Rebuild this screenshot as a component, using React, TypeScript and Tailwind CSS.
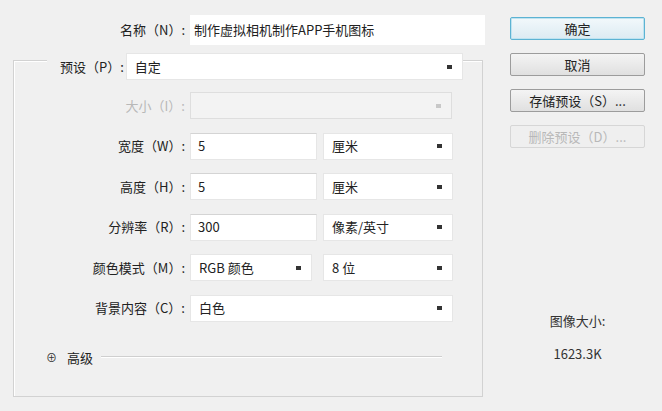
import React from "react";

const font = { fontFamily: '"Noto Sans CJK SC", "Noto Sans", sans-serif' };

function Arrow({ dim }: { dim?: boolean }) {
  return <span className={`w-[5px] h-[4px] ${dim ? "bg-[#c8c8c8]" : "bg-[#333]"}`} />;
}

function Select({ value, w, dim }: { value: string; w: string; dim?: boolean }) {
  return (
    <div className={`${w} h-[27px] flex items-center justify-between pl-[8px] pr-[10px] border ${dim ? "bg-[#f3f3f3] border-[#dedede]" : "bg-white border-[#e6e6e6]"}`}>
      <span className="text-[13px] text-[#222]">{value}</span>
      <Arrow dim={dim} />
    </div>
  );
}

function Input({ value }: { value: string }) {
  return (
    <div className="w-[127px] h-[27px] flex items-center pl-[7px] bg-white border border-[#e6e6e6] border-t-[#d4d4d4]">
      <span className="text-[13px] text-[#222]">{value}</span>
    </div>
  );
}

function Row({ label, children, dim }: { label: string; children: React.ReactNode; dim?: boolean }) {
  return (
    <div className="flex items-center h-[27px]">
      <div className={`w-[176px] text-right pr-[5px] text-[13px] whitespace-nowrap ${dim ? "text-[#b8b8b8]" : "text-[#222]"}`}>{label}</div>
      <div className="flex items-center gap-[6px]">{children}</div>
    </div>
  );
}

function Btn({ label, primary, dim }: { label: string; primary?: boolean; dim?: boolean }) {
  return (
    <div
      className={`w-[135px] h-[23px] flex items-center justify-center text-[13px] rounded-[2px] border whitespace-nowrap ${
        primary
          ? "border-[#5cb3d3] bg-gradient-to-b from-[#f2f8fb] to-[#dcebf2] text-[#222] shadow-[inset_0_0_0_1px_#bfe3f0]"
          : dim
          ? "border-[#d6d6d6] bg-[#efefef] text-[#b8b8b8]"
          : "border-[#9c9c9c] bg-gradient-to-b from-[#f4f4f4] to-[#e0e0e0] text-[#222]"
      }`}
    >
      {label}
    </div>
  );
}

export default function App() {
  return (
    <div className="w-[662px] h-[411px] bg-[#f0f0f0] flex overflow-hidden" style={font}>
      {/* left column */}
      <div className="w-[495px] flex flex-col pl-[13px]">
        <div className="flex items-center h-[30px] mt-[15px]">
          <div className="w-[177px] text-right pr-[5px] text-[13px] text-[#222] whitespace-nowrap">名称（N）:</div>
          <div className="w-[295px] h-[30px] bg-white flex items-center pl-[4px] text-[13px] text-[#222]">
            制作虚拟相机制作APP手机图标
          </div>
        </div>

        {/* group box */}
        <div className="mt-[15px] w-[470px] h-[337px] border border-[#d2d2d2] shadow-[inset_1px_1px_0_#ffffff] flex flex-col">
          <div className="flex items-center -mt-[8px]">
            <div className="w-[33px] h-[27px]" />
            <div className="h-[27px] flex items-center bg-[#f0f0f0] pl-[13px] pr-[2px] text-[13px] text-[#222] whitespace-nowrap">预设（P）:</div>
            <Select value="自定" w="w-[337px]" />
          </div>
          <div className="flex flex-col mt-[12px] gap-[13.5px]">
            <Row label="大小（I）:" dim>
              <Select value="" w="w-[262px]" dim />
            </Row>
            <Row label="宽度（W）:">
              <Input value="5" />
              <Select value="厘米" w="w-[130px]" />
            </Row>
            <Row label="高度（H）:">
              <Input value="5" />
              <Select value="厘米" w="w-[130px]" />
            </Row>
            <Row label="分辨率（R）:">
              <Input value="300" />
              <Select value="像素/英寸" w="w-[130px]" />
            </Row>
            <Row label="颜色模式（M）:">
              <div className="flex items-center gap-[11px]">
                <Select value="RGB 颜色" w="w-[122px]" />
                <Select value="8 位" w="w-[130px]" />
              </div>
            </Row>
            <Row label="背景内容（C）:">
              <Select value="白色" w="w-[263px]" />
            </Row>
          </div>
          <div className="flex items-center mt-[26px] pl-[32px] pr-[40px]">
            <span className="text-[11px] text-[#333] mr-[10px]">⊕</span>
            <span className="text-[13px] text-[#222] mr-[8px]">高级</span>
            <div className="flex-1 h-[2px] border-t border-[#cfcfcf] border-b-white border-b" />
          </div>
        </div>
      </div>

      {/* right column */}
      <div className="flex-1 flex flex-col pl-[15px]">
        <div className="mt-[17px] flex flex-col gap-[13px]">
          <Btn label="确定" primary />
          <Btn label="取消" />
          <Btn label="存储预设（S）..." />
          <Btn label="删除预设（D）..." dim />
        </div>
        <div className="mt-[163px] w-[135px] flex flex-col items-center gap-[13px] text-[13px] text-[#333]">
          <span>图像大小:</span>
          <span>1623.3K</span>
        </div>
      </div>
    </div>
  );
}
